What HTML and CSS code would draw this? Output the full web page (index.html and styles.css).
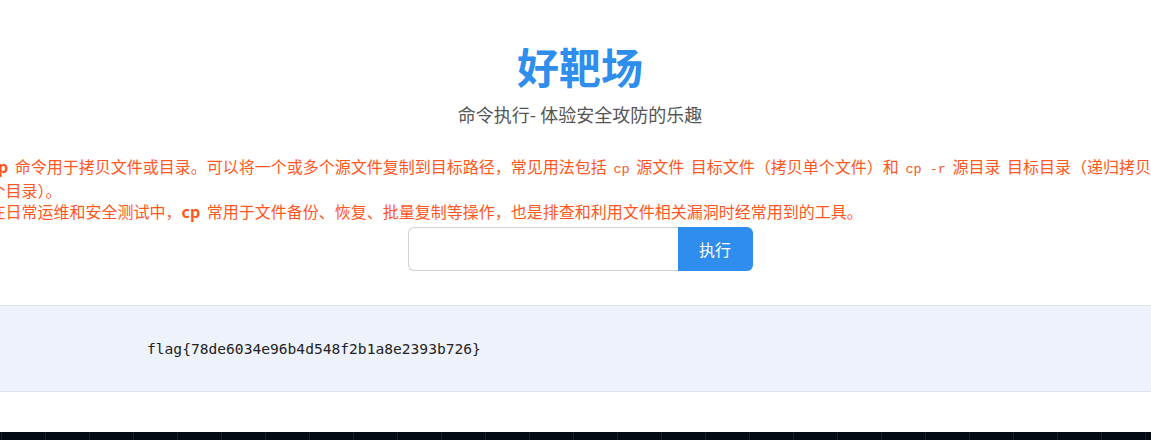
FILE: index.html
```html
<!DOCTYPE html>
<html lang="zh-CN">
<head>
  <meta charset="UTF-8"/>
  <meta name="viewport" content="width=device-width, initial-scale=1.0"/>
  <title>好靶场 - 命令执行</title>
  <link rel="stylesheet" href="styles.css">
</head>
<body>
  <div class="page">
    <header class="header">
      <h1 class="title">好靶场</h1>
      <p class="subtitle">命令执行- 体验安全攻防的乐趣</p>
    </header>

    <div class="desc-wrap">
      <div class="desc">
        <p><strong>cp</strong> 命令用于拷贝文件或目录。可以将一个或多个源文件复制到目标路径，常见用法包括 <code>cp</code> 源文件 目标文件（拷贝单个文件）和 <code>cp -r</code> 源目录 目标目录（递归拷贝整个目录）。</p>
        <p>在日常运维和安全测试中，<strong>cp</strong> 常用于文件备份、恢复、批量复制等操作，也是排查和利用文件相关漏洞时经常用到的工具。</p>
      </div>
    </div>

    <form class="cmd-form" onsubmit="return false;">
      <input class="cmd-input" type="text" name="cmd"/>
      <button class="cmd-btn" type="submit">执行</button>
    </form>

    <div class="result">
      <pre>flag{78de6034e96b4d548f2b1a8e2393b726}</pre>
    </div>

    <div class="matrix"></div>
  </div>
</body>
</html>
```

FILE: styles.css
```css
* {
  margin: 0;
  padding: 0;
  box-sizing: border-box;
}
html, body {
  overflow: hidden;
}
body {
  background: #fff;
  font-family: 'Noto Sans CJK SC', 'Noto Sans', sans-serif;
  color: #333;
}
.page {
  display: flex;
  flex-direction: column;
}
.header {
  text-align: center;
  padding-top: 38px;
  padding-left: 9px;
}
.title {
  font-size: 42px;
  font-weight: bold;
  color: #2e8ded;
  line-height: 56px;
}
.subtitle {
  margin-top: 7px;
  font-size: 18px;
  color: #555;
  line-height: 26px;
}
.desc-wrap {
  display: flex;
  justify-content: center;
  padding-left: 9px;
  margin-top: 29px;
}
.desc {
  flex-shrink: 0;
  width: 1181px;
  font-size: 16px;
  line-height: 21px;
  color: #ff5722;
  word-spacing: 3px;
}
.desc strong {
  font-weight: bold;
}
.desc code {
  font-family: 'Liberation Mono', monospace;
  font-size: 13.5px;
  word-spacing: 0;
}
.cmd-form {
  display: flex;
  justify-content: center;
  padding-left: 9px;
  margin-top: 5px;
}
.cmd-input {
  width: 270px;
  height: 44px;
  border: 1px solid #d0d3da;
  border-right: none;
  border-radius: 6px 0 0 6px;
  padding: 0 12px;
  font-size: 15px;
  outline: none;
}
.cmd-btn {
  width: 75px;
  height: 44px;
  background: #2e8ded;
  color: #fff;
  border: none;
  border-radius: 0 6px 6px 0;
  font-family: 'Noto Sans CJK SC', sans-serif;
  font-size: 16px;
  cursor: pointer;
}
.result {
  margin-top: 34px;
  height: 87px;
  background: #eef2fa;
  border-top: 1px solid #dde2ec;
  border-bottom: 1px solid #dde2ec;
  display: flex;
  align-items: center;
  padding: 0 147px;
}
.result pre {
  font-family: 'DejaVu Sans Mono', monospace;
  font-size: 14.6px;
  color: #222;
}
.matrix {
  margin-top: 40px;
  height: 40px;
  background-color: #030a12;
  background-image: repeating-linear-gradient(90deg, #0b2418 0, #0b2418 1px, transparent 1px, transparent 44px);
  background-position: 1px 0;
}
```
